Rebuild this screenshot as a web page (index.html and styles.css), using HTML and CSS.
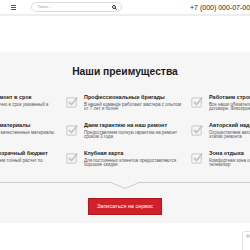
FILE: index.html
```html
<!DOCTYPE html>
<html lang="ru">
  <head>
    <meta charset="utf-8">
    <title>Наши преимущества</title>
    <link rel="stylesheet" href="styles.css">
  </head>
  <body>
    <div class="header">
      <svg class="menuIcon" width="5" height="5" viewBox="0 0 5 5">
        <rect x="0" y="0" width="5" height="1" fill="#555"/>
        <rect x="0" y="2" width="5" height="1" fill="#555"/>
        <rect x="0" y="4" width="5" height="1" fill="#555"/>
      </svg>
      <div class="search">
        <span class="searchText">Поиск...</span>
        <svg width="5" height="5" viewBox="0 0 10 10">
          <circle cx="4" cy="4" r="3" fill="none" stroke="#222" stroke-width="1.8"/>
          <line x1="6.2" y1="6.2" x2="9.3" y2="9.3" stroke="#222" stroke-width="2"/>
        </svg>
      </div>
      <div class="phone">+7 (000) 000-07-00</div>
    </div>

    <div class="advantages">
      <h2>Наши преимущества</h2>
      <div class="features">
        <div class="item">
          <svg class="check" width="12" height="12" viewBox="0 0 12 12"><rect x="0.8" y="1.8" width="9.4" height="9.4" rx="1.5" fill="none" stroke="#cfcfcf" stroke-width="1.2"/><path d="M3 6 L5.5 8.5 L11.3 1.5" fill="none" stroke="#c4c4c4" stroke-width="1.8"/></svg>
          <div class="text">
            <div class="title">Выполняем ремонт в срок</div>
            <div class="desc">Сделаем ремонт точно в срок указанный в договоре</div>
          </div>
        </div>
        <div class="item">
          <svg class="check" width="12" height="12" viewBox="0 0 12 12"><rect x="0.8" y="1.8" width="9.4" height="9.4" rx="1.5" fill="none" stroke="#cfcfcf" stroke-width="1.2"/><path d="M3 6 L5.5 8.5 L11.3 1.5" fill="none" stroke="#c4c4c4" stroke-width="1.8"/></svg>
          <div class="text">
            <div class="title">Профессиональные бригады</div>
            <div class="desc">В нашей команде работают мастера с опытом от 7 лет и более</div>
          </div>
        </div>
        <div class="item">
          <svg class="check" width="12" height="12" viewBox="0 0 12 12"><rect x="0.8" y="1.8" width="9.4" height="9.4" rx="1.5" fill="none" stroke="#cfcfcf" stroke-width="1.2"/><path d="M3 6 L5.5 8.5 L11.3 1.5" fill="none" stroke="#c4c4c4" stroke-width="1.8"/></svg>
          <div class="text">
            <div class="title">Работаем строго по договору</div>
            <div class="desc">Все наши обязательства прописаны в договоре. Фиксированная цена</div>
          </div>
        </div>

        <div class="item">
          <svg class="check" width="12" height="12" viewBox="0 0 12 12"><rect x="0.8" y="1.8" width="9.4" height="9.4" rx="1.5" fill="none" stroke="#cfcfcf" stroke-width="1.2"/><path d="M3 6 L5.5 8.5 L11.3 1.5" fill="none" stroke="#c4c4c4" stroke-width="1.8"/></svg>
          <div class="text">
            <div class="title">Качественные материалы</div>
            <div class="desc">Используем только качественные материалы</div>
          </div>
        </div>
        <div class="item">
          <svg class="check" width="12" height="12" viewBox="0 0 12 12"><rect x="0.8" y="1.8" width="9.4" height="9.4" rx="1.5" fill="none" stroke="#cfcfcf" stroke-width="1.2"/><path d="M3 6 L5.5 8.5 L11.3 1.5" fill="none" stroke="#c4c4c4" stroke-width="1.8"/></svg>
          <div class="text">
            <div class="title">Даем гарантию на наш ремонт</div>
            <div class="desc">Предоставляем полную гарантию на ремонт сроком 3 года</div>
          </div>
        </div>
        <div class="item">
          <svg class="check" width="12" height="12" viewBox="0 0 12 12"><rect x="0.8" y="1.8" width="9.4" height="9.4" rx="1.5" fill="none" stroke="#cfcfcf" stroke-width="1.2"/><path d="M3 6 L5.5 8.5 L11.3 1.5" fill="none" stroke="#c4c4c4" stroke-width="1.8"/></svg>
          <div class="text">
            <div class="title">Авторский надзор</div>
            <div class="desc">Осуществляем авторский надзор на всех этапах ремонта</div>
          </div>
        </div>

        <div class="item">
          <svg class="check" width="12" height="12" viewBox="0 0 12 12"><rect x="0.8" y="1.8" width="9.4" height="9.4" rx="1.5" fill="none" stroke="#cfcfcf" stroke-width="1.2"/><path d="M3 6 L5.5 8.5 L11.3 1.5" fill="none" stroke="#c4c4c4" stroke-width="1.8"/></svg>
          <div class="text">
            <div class="title">Полностью прозрачный бюджет</div>
            <div class="desc">Никаких доплат. Даем точный расчет по материалам</div>
          </div>
        </div>
        <div class="item">
          <svg class="check" width="12" height="12" viewBox="0 0 12 12"><rect x="0.8" y="1.8" width="9.4" height="9.4" rx="1.5" fill="none" stroke="#cfcfcf" stroke-width="1.2"/><path d="M3 6 L5.5 8.5 L11.3 1.5" fill="none" stroke="#c4c4c4" stroke-width="1.8"/></svg>
          <div class="text">
            <div class="title">Клубная карта</div>
            <div class="desc">Для постоянных клиентов предоставляются хорошие скидки</div>
          </div>
        </div>
        <div class="item">
          <svg class="check" width="12" height="12" viewBox="0 0 12 12"><rect x="0.8" y="1.8" width="9.4" height="9.4" rx="1.5" fill="none" stroke="#cfcfcf" stroke-width="1.2"/><path d="M3 6 L5.5 8.5 L11.3 1.5" fill="none" stroke="#c4c4c4" stroke-width="1.8"/></svg>
          <div class="text">
            <div class="title">Зона отдыха</div>
            <div class="desc">Комфортная зона отдыха для клиентов, Wi-Fi, телевизор</div>
          </div>
        </div>
      </div>

      <div class="divider">
        <div class="line"></div>
        <svg width="28" height="8" viewBox="0 0 28 8">
          <polyline points="0,0.5 14,6.5 28,0.5" fill="none" stroke="#cdcdcd" stroke-width="1"/>
        </svg>
        <div class="line"></div>
      </div>

      <div class="btnRow">
        <a class="orderBtn" href="#">Записаться на сервис</a>
      </div>
    </div>

    <div class="chatWidget"><span class="chatDot"></span></div>
  </body>
</html>
```

FILE: styles.css
```css
body {
  margin: 0;
  font-family: "Liberation Sans", Arial, sans-serif;
  color: #222;
  background-color: #fff;
  overflow: hidden;
}
.header {
  display: flex;
  align-items: center;
  height: 14px;
  border-bottom: 2px solid #eee;
  padding-left: 11px;
}
.menuIcon {
  flex: none;
}
.search {
  display: flex;
  align-items: center;
  justify-content: space-between;
  box-sizing: border-box;
  width: 91px;
  height: 10px;
  margin-left: 15px;
  padding: 0 4px 0 6px;
  border: 1px solid #dcdcdc;
  border-radius: 6px;
  flex: none;
}
.searchText {
  font-size: 3.5px;
  color: #999;
}
.phone {
  margin-left: 68px;
  font-size: 7px;
  white-space: nowrap;
  color: #222;
}
.advantages {
  display: flex;
  flex-direction: column;
  align-items: center;
  margin-top: 36px;
  padding: 13px 0 8px;
  background-color: #f6f6f6;
}
.advantages h2 {
  margin: 0;
  font-size: 10.3px;
  line-height: 13px;
  font-weight: bold;
  color: #1a1a1a;
}
.features {
  display: grid;
  grid-template-columns: repeat(3, 125px);
  grid-auto-rows: 28px;
  width: 375px;
  flex: none;
  margin-top: 16px;
}
.item {
  display: flex;
  gap: 6px;
  padding-left: 3.5px;
}
.check {
  flex: none;
  margin-top: 2px;
}
.title {
  font-size: 5.5px;
  line-height: 6px;
  font-weight: bold;
  white-space: nowrap;
  color: #222;
}
.desc {
  width: 98px;
  margin-top: 2.5px;
  font-size: 4.5px;
  line-height: 4.5px;
  color: #555;
}
.divider {
  display: flex;
  align-items: flex-start;
  width: 100%;
  height: 8px;
  margin-top: 4px;
}
.divider .line {
  flex: 1;
  border-top: 1px solid #cdcdcd;
}
.btnRow {
  margin-top: 8px;
}
.orderBtn {
  display: block;
  box-sizing: border-box;
  width: 74px;
  height: 17px;
  line-height: 15px;
  text-align: center;
  font-size: 5.5px;
  color: #fff;
  text-decoration: none;
  background-color: #d0202a;
  border: 1px solid #b3171e;
}
.chatWidget {
  position: absolute;
  left: 242px;
  top: 231px;
  width: 20px;
  height: 30px;
  box-sizing: border-box;
  border: 1px solid #e2e2e2;
  border-radius: 3px;
  background-color: #fff;
}
.chatDot {
  display: block;
  width: 4px;
  height: 4px;
  margin: 2px 0 0 3px;
  border-radius: 50%;
  background-color: #d5d5d5;
}
```
